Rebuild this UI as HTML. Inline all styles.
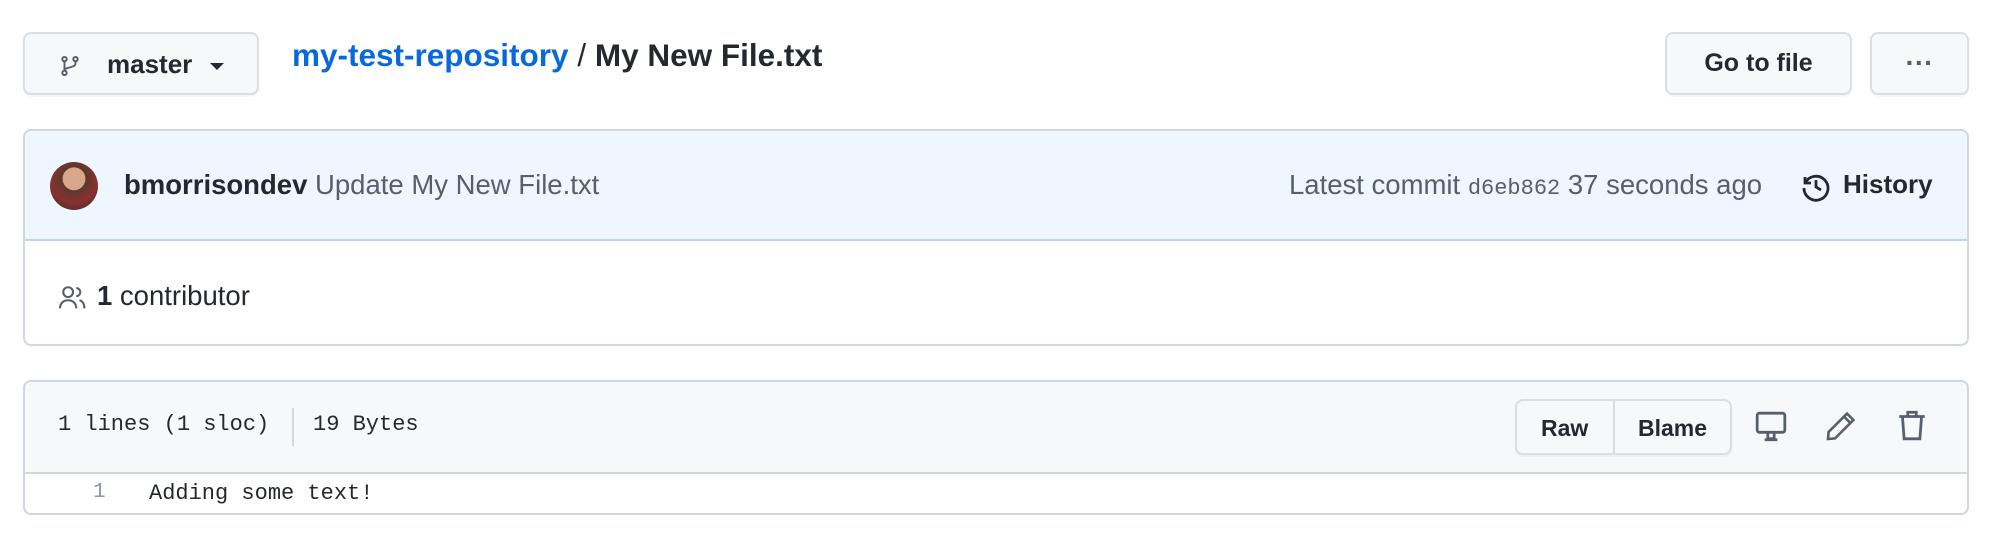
<!DOCTYPE html>
<html><head><style>
body{margin:0;width:2000px;height:551px;background:#fff;font-family:"Liberation Sans",sans-serif;color:#24292f;position:relative;overflow:hidden}
.abs{position:absolute}
.btn{position:absolute;background:#f6f8fa;border:2px solid #d8dee4;border-radius:8px;box-sizing:border-box;box-shadow:0 2px 0 rgba(27,31,36,.04)}
.mono{font-family:"Liberation Mono",monospace}
</style></head><body>
<div class="btn" style="left:23px;top:32px;width:236px;height:63px">
 <svg class="abs" style="left:34px;top:19px" width="22" height="26" viewBox="0 0 16 16" fill="none" stroke="#57606a" stroke-width="1.4"><circle cx="4" cy="3" r="1.6"/><circle cx="12" cy="3" r="1.6"/><circle cx="4" cy="13" r="1.6"/><path d="M4 4.6v6.8M12 4.6v1.4c0 2-2 2.5-4 3s-4 1-4 2.4"/></svg>
 <span class="abs" style="left:82px;top:15px;font-size:26px;font-weight:bold">master</span>
 <svg class="abs" style="left:185px;top:27px" width="14" height="10"><path d="M0 2h14L7 9z" fill="#24292f"/></svg>
</div>
<div class="abs" style="left:292px;top:37px;font-size:31.5px"><span style="color:#0969da;font-weight:bold">my-test-repository</span> / <b>My New File.txt</b></div>
<div class="btn" style="left:1665px;top:32px;width:187px;height:63px;font-size:25px;font-weight:bold;text-align:center;line-height:59px">Go to file</div>
<div class="btn" style="left:1870px;top:32px;width:99px;height:63px;font-size:28px;font-weight:bold;text-align:center;line-height:58px;color:#57606a">···</div>

<div class="abs" style="left:23px;top:129px;width:1946px;height:217px;border:2px solid #d0d7de;border-radius:8px;box-sizing:border-box;overflow:hidden">
 <div style="height:108px;background:#eef6ff;border-bottom:2px solid #b6d7f7;position:relative">
  <div class="abs" style="left:25px;top:31px;width:48px;height:48px;border-radius:50%;background:radial-gradient(circle at 50% 35%,#d9a88c 0 28%,#5a3a2a 30%,#8a3030 60%,#3a2a25 100%)"></div>
  <div class="abs" style="left:99px;top:38px;font-size:27.5px"><b>bmorrisondev</b> <span style="color:#57606a">Update My New File.txt</span></div>
  <div class="abs" style="left:1264px;top:38px;font-size:27.5px;color:#57606a">Latest commit <span class="mono" style="font-size:22px">d6eb862</span> 37 seconds ago</div>
  <svg class="abs" style="left:1775px;top:40px" width="32" height="32" viewBox="0 0 16 16" fill="none" stroke="#24292f" stroke-width="1.4"><path d="M2.5 3v3h3"/><path d="M2.6 6A6 6 0 1 1 2 8.5"/><path d="M8 4.5V8l2.5 1.5"/></svg>
  <div class="abs" style="left:1818px;top:38px;font-size:26px;font-weight:bold">History</div>
 </div>
 <svg class="abs" style="left:33px;top:153px" width="30" height="26" viewBox="0 0 18 16" fill="none" stroke="#57606a" stroke-width="1.3"><circle cx="6" cy="5" r="3"/><path d="M1 15c0-3 2-5 5-5s5 2 5 5M11 2.5a2.5 2.5 0 0 1 0 5M13 10c2 .5 3 2.5 3 5"/></svg>
 <div class="abs" style="left:72px;top:149px;font-size:27.5px"><b>1</b> contributor</div>
</div>

<div class="abs" style="left:23px;top:380px;width:1946px;height:135px;border:2px solid #d0d7de;border-radius:8px;box-sizing:border-box;overflow:hidden">
 <div style="height:90px;background:#f6f8fa;border-bottom:2px solid #d0d7de;position:relative">
  <div class="abs mono" style="left:33px;top:30px;font-size:22px">1 lines (1 sloc)</div>
  <div class="abs" style="left:267px;top:26px;width:2px;height:38px;background:#d0d7de"></div>
  <div class="abs mono" style="left:288px;top:30px;font-size:22px">19 Bytes</div>
  <div class="btn" style="left:1490px;top:17px;width:217px;height:56px;background:#f6f8fa">
   <div class="abs" style="left:96px;top:0;width:2px;height:52px;background:#d8dee4"></div>
   <span class="abs" style="left:24px;top:14px;font-size:23px;font-weight:bold">Raw</span>
   <span class="abs" style="left:121px;top:14px;font-size:23px;font-weight:bold">Blame</span>
  </div>
  <svg class="abs" style="left:1729px;top:28px" width="34" height="34" viewBox="0 0 16 16" fill="none" stroke="#57606a" stroke-width="1.3"><rect x="1.5" y="1.5" width="13" height="9" rx="1"/><path d="M6.5 10.5v3h3v-3M5 14h6"/></svg>
  <svg class="abs" style="left:1800px;top:28px" width="32" height="32" viewBox="0 0 16 16" fill="none" stroke="#57606a" stroke-width="1.3"><path d="M11 1.8l3.2 3.2L5 14.2 1.5 14.5 1.8 11z M9.5 3.3l3.2 3.2"/></svg>
  <svg class="abs" style="left:1872px;top:26px" width="30" height="34" viewBox="0 0 14 16" fill="none" stroke="#57606a" stroke-width="1.3"><path d="M1 4h12M5 4V2h4v2M2.5 4l.8 10.5h7.4L11.5 4"/></svg>
 </div>
 <div class="abs mono" style="left:68px;top:99px;font-size:21px;color:#8c959f">1</div>
 <div class="abs mono" style="left:124px;top:99px;font-size:22px">Adding some text!</div>
</div>
</body></html>
